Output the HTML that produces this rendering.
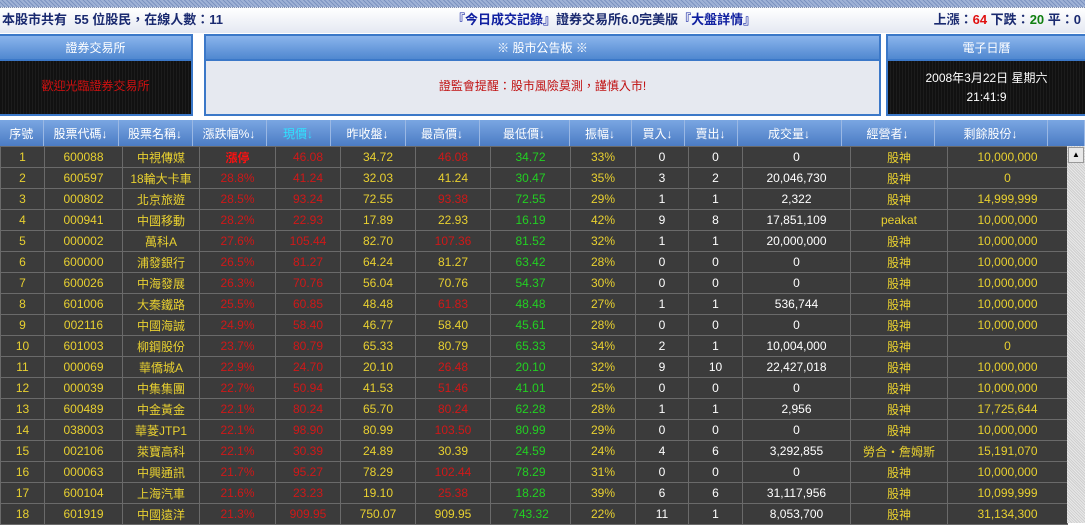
<!DOCTYPE html><html><head><meta charset="utf-8"><style>
*{margin:0;padding:0;box-sizing:border-box}
body{width:1085px;height:523px;overflow:hidden;background:#fff;font-family:"Liberation Sans","Noto Sans CJK TC",sans-serif;font-size:12px;position:relative}
.stripe{position:absolute;left:0;top:0;width:1085px;height:7px;background:repeating-linear-gradient(45deg,#7c93c0 0 1px,#9fb2d6 1px 3px)}
.top{position:absolute;left:0;top:7px;width:1085px;height:26px;background:linear-gradient(#fff,#e4e8f2);border-top:1px dotted #8090b0;font-weight:bold;font-size:13px;color:#1a2a70;line-height:24px}
.panel{position:absolute;top:34px;height:82px;border:2px solid #3b78c8;background:#e6e9f0}
.ph{height:25px;background:linear-gradient(#8ab4ec,#5088d0);color:#fff;text-align:center;line-height:24px;border-bottom:2px solid #3b78c8}
.dark{background:repeating-linear-gradient(90deg,#111 0 2px,#1c1c1c 2px 3px);height:53px;text-align:center}
table{position:absolute;border-collapse:collapse;table-layout:fixed}
#hd{left:0;top:120px;width:1085px}
#hd td{height:26px;background:linear-gradient(#7aa6e2,#4b7cc4);color:#fff;text-align:center;border-right:1px solid #9ab8e4;font-size:12px}
#bd{left:0;top:146px;width:1067px}
#bd td{height:21px;background:#3b3b3b;border:1px solid #6a6a6a;color:#e8d030;text-align:center;font-size:12px;white-space:nowrap;overflow:hidden}
.r{color:#d01818!important}.g{color:#22d022!important}.rb{color:#ff1010!important;font-weight:bold}
.sb{position:absolute;left:1067px;top:146px;width:18px;height:377px;background:repeating-linear-gradient(45deg,#e8e8e8 0 1px,#cfcfcf 1px 2px)}
.sbb{position:absolute;left:1068px;top:147px;width:16px;height:16px;background:#e8e8e8;border:1px solid #999;font-size:8px;text-align:center;line-height:14px}
</style></head><body>
<div class="stripe"></div>
<div class="top"><span style="position:absolute;left:2px">本股市共有&nbsp; 55 位股民，在線人數：11</span><span style="position:absolute;left:452px;color:#1020a0">『今日成交記錄』<span style="color:#1a2a70">證券交易所6.0完美版</span>『大盤詳情』</span><span style="position:absolute;right:4px">上漲：<span style="color:#e01010">64</span> 下跌：<span style="color:#108010">20</span> 平：0</span></div>
<div class="panel" style="left:-2px;width:195px"><div class="ph">證券交易所</div><div class="dark" style="line-height:50px;color:#d01010">歡迎光臨證券交易所</div></div>
<div class="panel" style="left:204px;width:677px"><div class="ph">※ 股市公告板 ※</div><div style="text-align:center;line-height:50px;color:#c01010">證監會提醒：股市風險莫測，謹慎入市!</div></div>
<div class="panel" style="left:886px;width:201px"><div class="ph">電子日曆</div><div class="dark" style="color:#fff;padding-top:8px;line-height:19px">2008年3月22日 星期六<br>21:41:9</div></div>
<table id="hd"><tr><td style="width:43px">序號</td><td style="width:75px">股票代碼↓</td><td style="width:74px">股票名稱↓</td><td style="width:74px">漲跌幅%↓</td><td style="width:64px;color:#30e0ff">現價↓</td><td style="width:75px">昨收盤↓</td><td style="width:74px">最高價↓</td><td style="width:90px">最低價↓</td><td style="width:62px">振幅↓</td><td style="width:53px">買入↓</td><td style="width:53px">賣出↓</td><td style="width:104px">成交量↓</td><td style="width:93px">經營者↓</td><td style="width:113px">剩餘股份↓</td><td></td></tr></table>
<table id="bd">
<colgroup><col style="width:44px"><col style="width:78px"><col style="width:77px"><col style="width:76px"><col style="width:65px"><col style="width:75px"><col style="width:75px"><col style="width:80px"><col style="width:65px"><col style="width:53px"><col style="width:54px"><col style="width:108px"><col style="width:97px"><col style="width:120px"></colgroup>
<tr><td>1</td><td>600088</td><td>中視傳媒</td><td class="rb">漲停</td><td class="r">46.08</td><td>34.72</td><td class="r">46.08</td><td class="g">34.72</td><td>33%</td><td style="color:#fff">0</td><td style="color:#fff">0</td><td style="color:#fff">0</td><td>股神</td><td>10,000,000</td></tr>
<tr><td>2</td><td>600597</td><td>18輪大卡車</td><td class="r">28.8%</td><td class="r">41.24</td><td>32.03</td><td>41.24</td><td class="g">30.47</td><td>35%</td><td style="color:#fff">3</td><td style="color:#fff">2</td><td style="color:#fff">20,046,730</td><td>股神</td><td>0</td></tr>
<tr><td>3</td><td>000802</td><td>北京旅遊</td><td class="r">28.5%</td><td class="r">93.24</td><td>72.55</td><td class="r">93.38</td><td class="g">72.55</td><td>29%</td><td style="color:#fff">1</td><td style="color:#fff">1</td><td style="color:#fff">2,322</td><td>股神</td><td>14,999,999</td></tr>
<tr><td>4</td><td>000941</td><td>中國移動</td><td class="r">28.2%</td><td class="r">22.93</td><td>17.89</td><td>22.93</td><td class="g">16.19</td><td>42%</td><td style="color:#fff">9</td><td style="color:#fff">8</td><td style="color:#fff">17,851,109</td><td>peakat</td><td>10,000,000</td></tr>
<tr><td>5</td><td>000002</td><td>萬科A</td><td class="r">27.6%</td><td class="r">105.44</td><td>82.70</td><td class="r">107.36</td><td class="g">81.52</td><td>32%</td><td style="color:#fff">1</td><td style="color:#fff">1</td><td style="color:#fff">20,000,000</td><td>股神</td><td>10,000,000</td></tr>
<tr><td>6</td><td>600000</td><td>浦發銀行</td><td class="r">26.5%</td><td class="r">81.27</td><td>64.24</td><td>81.27</td><td class="g">63.42</td><td>28%</td><td style="color:#fff">0</td><td style="color:#fff">0</td><td style="color:#fff">0</td><td>股神</td><td>10,000,000</td></tr>
<tr><td>7</td><td>600026</td><td>中海發展</td><td class="r">26.3%</td><td class="r">70.76</td><td>56.04</td><td>70.76</td><td class="g">54.37</td><td>30%</td><td style="color:#fff">0</td><td style="color:#fff">0</td><td style="color:#fff">0</td><td>股神</td><td>10,000,000</td></tr>
<tr><td>8</td><td>601006</td><td>大秦鐵路</td><td class="r">25.5%</td><td class="r">60.85</td><td>48.48</td><td class="r">61.83</td><td class="g">48.48</td><td>27%</td><td style="color:#fff">1</td><td style="color:#fff">1</td><td style="color:#fff">536,744</td><td>股神</td><td>10,000,000</td></tr>
<tr><td>9</td><td>002116</td><td>中國海誠</td><td class="r">24.9%</td><td class="r">58.40</td><td>46.77</td><td>58.40</td><td class="g">45.61</td><td>28%</td><td style="color:#fff">0</td><td style="color:#fff">0</td><td style="color:#fff">0</td><td>股神</td><td>10,000,000</td></tr>
<tr><td>10</td><td>601003</td><td>柳鋼股份</td><td class="r">23.7%</td><td class="r">80.79</td><td>65.33</td><td>80.79</td><td class="g">65.33</td><td>34%</td><td style="color:#fff">2</td><td style="color:#fff">1</td><td style="color:#fff">10,004,000</td><td>股神</td><td>0</td></tr>
<tr><td>11</td><td>000069</td><td>華僑城A</td><td class="r">22.9%</td><td class="r">24.70</td><td>20.10</td><td class="r">26.48</td><td class="g">20.10</td><td>32%</td><td style="color:#fff">9</td><td style="color:#fff">10</td><td style="color:#fff">22,427,018</td><td>股神</td><td>10,000,000</td></tr>
<tr><td>12</td><td>000039</td><td>中集集團</td><td class="r">22.7%</td><td class="r">50.94</td><td>41.53</td><td class="r">51.46</td><td class="g">41.01</td><td>25%</td><td style="color:#fff">0</td><td style="color:#fff">0</td><td style="color:#fff">0</td><td>股神</td><td>10,000,000</td></tr>
<tr><td>13</td><td>600489</td><td>中金黃金</td><td class="r">22.1%</td><td class="r">80.24</td><td>65.70</td><td class="r">80.24</td><td class="g">62.28</td><td>28%</td><td style="color:#fff">1</td><td style="color:#fff">1</td><td style="color:#fff">2,956</td><td>股神</td><td>17,725,644</td></tr>
<tr><td>14</td><td>038003</td><td>華菱JTP1</td><td class="r">22.1%</td><td class="r">98.90</td><td>80.99</td><td class="r">103.50</td><td class="g">80.99</td><td>29%</td><td style="color:#fff">0</td><td style="color:#fff">0</td><td style="color:#fff">0</td><td>股神</td><td>10,000,000</td></tr>
<tr><td>15</td><td>002106</td><td>萊寶高科</td><td class="r">22.1%</td><td class="r">30.39</td><td>24.89</td><td>30.39</td><td class="g">24.59</td><td>24%</td><td style="color:#fff">4</td><td style="color:#fff">6</td><td style="color:#fff">3,292,855</td><td>勞合・詹姆斯</td><td>15,191,070</td></tr>
<tr><td>16</td><td>000063</td><td>中興通訊</td><td class="r">21.7%</td><td class="r">95.27</td><td>78.29</td><td class="r">102.44</td><td class="g">78.29</td><td>31%</td><td style="color:#fff">0</td><td style="color:#fff">0</td><td style="color:#fff">0</td><td>股神</td><td>10,000,000</td></tr>
<tr><td>17</td><td>600104</td><td>上海汽車</td><td class="r">21.6%</td><td class="r">23.23</td><td>19.10</td><td class="r">25.38</td><td class="g">18.28</td><td>39%</td><td style="color:#fff">6</td><td style="color:#fff">6</td><td style="color:#fff">31,117,956</td><td>股神</td><td>10,099,999</td></tr>
<tr><td>18</td><td>601919</td><td>中國遠洋</td><td class="r">21.3%</td><td class="r">909.95</td><td>750.07</td><td>909.95</td><td class="g">743.32</td><td>22%</td><td style="color:#fff">11</td><td style="color:#fff">1</td><td style="color:#fff">8,053,700</td><td>股神</td><td>31,134,300</td></tr>
</table>
<div class="sb"></div><div class="sbb">▲</div>
</body></html>
